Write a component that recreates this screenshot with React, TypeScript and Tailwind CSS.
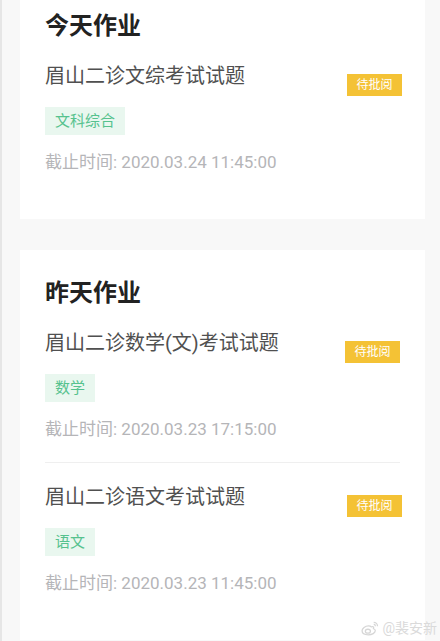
const FONT = 'Roboto, "Noto Sans CJK SC", sans-serif';

interface Homework {
  title: string;
  subject: string;
  deadline: string;
}

const SECTIONS: { heading: string; items: Homework[] }[] = [
  {
    heading: '今天作业',
    items: [
      { title: '眉山二诊文综考试试题', subject: '文科综合', deadline: '2020.03.24 11:45:00' },
    ],
  },
  {
    heading: '昨天作业',
    items: [
      { title: '眉山二诊数学(文)考试试题', subject: '数学', deadline: '2020.03.23 17:15:00' },
      { title: '眉山二诊语文考试试题', subject: '语文', deadline: '2020.03.23 11:45:00' },
    ],
  },
];

function HomeworkItem({ item, last }: { item: Homework; last: boolean }) {
  return (
    <div className={last ? '' : 'border-b border-[#efefef] pb-[21px] mb-[20px] mr-[2px]'}>
      <div className="flex items-start justify-between">
        <div className="flex flex-col items-start">
          <div className="h-[28px] text-[20px] leading-[28px] text-[#505050]">{item.title}</div>
          <span className="mt-[17px] flex h-[28px] items-center bg-[#e9f7ef] px-[10px] text-[15px] text-[#56c28e]">
            {item.subject}
          </span>
          <div className="mt-[15px] h-[24px] text-[17px] leading-[24px] text-[#b5b5b8]">
            截止时间: {item.deadline}
          </div>
        </div>
        <span className="mt-[12px] flex h-[22px] w-[55px] items-center justify-center bg-[#f4c235] text-[12px] text-white">
          待批阅
        </span>
      </div>
    </div>
  );
}

export default function App() {
  return (
    <div
      className="relative h-[641px] w-[440px] overflow-hidden border-l-[2px] border-[#e6e6e6] bg-[#f8f8f8]"
      style={{ fontFamily: FONT }}
    >
      <div className="-mt-[17px] flex flex-col gap-[31px] pl-[18px] pr-[15px]">
        {SECTIONS.map((section) => (
          <section key={section.heading} className="bg-white pb-[45px] pl-[25px] pr-[23px] pt-[27px]">
            <h2 className="mb-[20px] h-[32px] text-[24px] font-bold leading-[32px] text-[#222]">
              {section.heading}
            </h2>
            {section.items.map((item, i) => (
              <HomeworkItem key={item.title} item={item} last={i === section.items.length - 1} />
            ))}
          </section>
        ))}
      </div>

      {/* watermark */}
      <div className="absolute bottom-[2px] right-[3px] flex items-center gap-[3px] text-[14px] text-[#dadada]">
        <svg width="18" height="15" viewBox="0 0 17 14" fill="none" stroke="#d6d6d6" strokeWidth="1.2">
          <path d="M7 4.5C4 4.5 1 7 1 9.2 1 11.5 3.6 13 7 13s6.5-1.8 6.5-4c0-1.3-1.2-1.6-1.8-1.8.6-1.4.2-2.4-1.8-1.8C9.5 5.8 10 4.5 7 4.5z" />
          <ellipse cx="6.5" cy="9.5" rx="2.4" ry="1.8" />
          <path d="M12 1.2c2 0 3.6 1.6 3.6 3.6M12 3.2c.9 0 1.6.7 1.6 1.6" />
        </svg>
        <span>@裴安新</span>
      </div>
    </div>
  );
}
